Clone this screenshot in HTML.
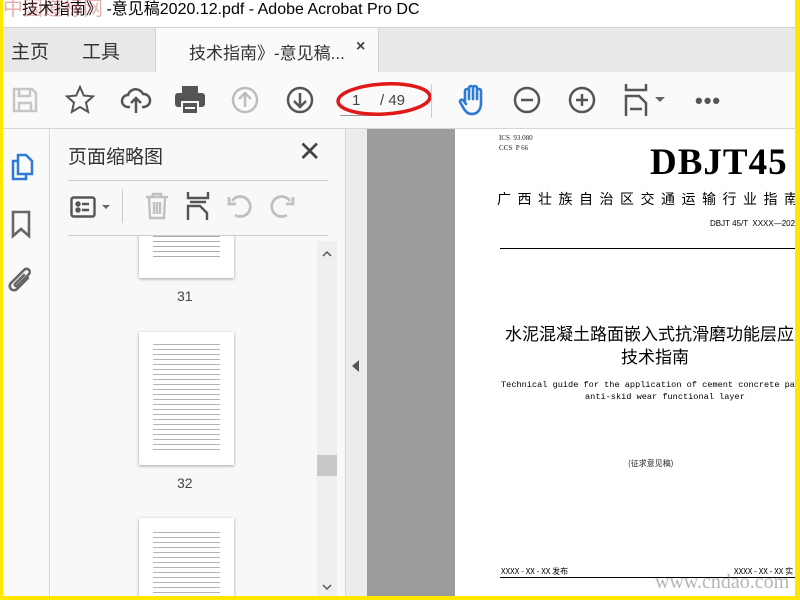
<!DOCTYPE html>
<html><head><meta charset="utf-8"><style>
*{margin:0;padding:0;box-sizing:border-box}
html,body{width:800px;height:600px;overflow:hidden}
body{background:#ffe800;font-family:"Liberation Sans","Noto Sans CJK SC",sans-serif;position:relative}
.a{position:absolute}
.lines{background:repeating-linear-gradient(to bottom,#777 0 1.2px,transparent 1.2px 5px)}
svg{position:absolute;overflow:visible}
</style></head><body>
<div class="a" style="left:3px;top:0;width:792px;height:596px;background:#fff"></div>
<div class="a" style="left:22px;top:0;font-size:16px;color:#000;line-height:20px;white-space:nowrap">技术指南》 -意见稿2020.12.pdf - Adobe Acrobat Pro DC</div>
<div class="a" style="left:3px;top:-3px;font-size:20px;color:rgba(200,80,80,.45);line-height:24px">中国道标网</div>
<!-- tab bar -->
<div class="a" style="left:3px;top:27px;width:792px;height:45px;background:#e8e8e8;border-top:1px solid #d0d0d0"></div>
<div class="a" style="left:11px;top:37px;font-size:19px;color:#333">主页</div>
<div class="a" style="left:82px;top:37px;font-size:19px;color:#333">工具</div>
<div class="a" style="left:155px;top:28px;width:224px;height:44px;background:#fafafa;border-left:1px solid #d0d0d0;border-right:1px solid #d0d0d0"></div>
<div class="a" style="left:189px;top:39px;font-size:17px;color:#333">技术指南》-意见稿...</div>
<div class="a" style="left:356px;top:38px;font-size:16px;color:#444;font-weight:bold">×</div>
<!-- toolbar -->
<div class="a" style="left:3px;top:72px;width:792px;height:57px;background:#fafafa;border-bottom:1px solid #d6d6d6"></div>
<svg style="left:12px;top:87px" width="26" height="26" viewBox="0 0 26 26" fill="none" stroke="#c6c6c6" stroke-width="2.5"><path d="M2 2h18l4 4v18H2z"/><path d="M7 2v7h11V2M7 24v-8h12v8"/></svg>
<svg style="left:65px;top:85px" width="30" height="30" viewBox="0 0 30 30" fill="none" stroke="#555" stroke-width="2"><path d="M15 2l3.8 8.6 9.2.8-7 6.2 2.1 9.2L15 22l-8.1 4.8L9 17.6 2 11.4l9.2-.8z"/></svg>
<svg style="left:121px;top:86px" width="30" height="28" viewBox="0 0 30 28" fill="none" stroke="#555" stroke-width="2.5"><path d="M9 21H7a6 6 0 0 1 0-12 8 8 0 0 1 15-1 6 6 0 0 1 1 13h-2"/><path d="M15 27V12M10 17l5-5 5 5"/></svg>
<svg style="left:175px;top:86px" width="30" height="28" viewBox="0 0 30 28"><rect x="7" y="0" width="16" height="7" fill="#555"/><rect x="0" y="7" width="30" height="14" rx="3" fill="#555"/><rect x="7" y="16" width="16" height="12" fill="#555" stroke="#fafafa" stroke-width="2"/><rect x="10" y="21" width="10" height="2" fill="#fafafa"/></svg>
<svg style="left:231px;top:86px" width="28" height="28" viewBox="0 0 28 28" fill="none" stroke="#bdbdbd" stroke-width="2.5"><circle cx="14" cy="14" r="12"/><path d="M14 21V8M8 13l6-6 6 6"/></svg>
<svg style="left:286px;top:86px" width="28" height="28" viewBox="0 0 28 28" fill="none" stroke="#555" stroke-width="2.5"><circle cx="14" cy="14" r="12"/><path d="M14 7v13M8 15l6 6 6-6"/></svg>
<div class="a" style="left:340px;top:115px;width:36px;height:1px;background:#999"></div>
<div class="a" style="left:352px;top:92px;font-size:15px;color:#444">1</div>
<div class="a" style="left:380px;top:92px;font-size:15px;color:#444">/ 49</div>
<svg style="left:335px;top:80px" width="98" height="38" viewBox="0 0 98 38"><ellipse cx="49" cy="19" rx="46" ry="15" fill="none" stroke="#e01818" stroke-width="3.5" transform="rotate(-3 49 19)"/></svg>
<div class="a" style="left:431px;top:84px;width:1px;height:34px;background:#ccc"></div>
<svg style="left:458px;top:84px" width="30" height="32" viewBox="0 0 30 32" fill="none" stroke="#2d7ad6" stroke-width="2.6" stroke-linecap="round" stroke-linejoin="round"><path d="M7 17V7a2 2 0 0 1 4 0v8M11 15V4a2 2 0 0 1 4 0v11M15 14V4a2 2 0 0 1 4 0v11M19 14V7a2 2 0 0 1 4 0v12c0 7-4 11-9 11-4 0-6-2-8-5l-4-7a2 2 0 0 1 3-2l3 4"/></svg>
<svg style="left:513px;top:86px" width="28" height="28" viewBox="0 0 28 28" fill="none" stroke="#555" stroke-width="2.5"><circle cx="14" cy="14" r="12"/><path d="M8 14h12"/></svg>
<svg style="left:568px;top:86px" width="28" height="28" viewBox="0 0 28 28" fill="none" stroke="#555" stroke-width="2.5"><circle cx="14" cy="14" r="12"/><path d="M8 14h12M14 8v12"/></svg>
<svg style="left:624px;top:84px" width="24" height="32" viewBox="0 0 24 32" fill="none" stroke="#555" stroke-width="2.5"><path d="M2 0v6h20V0M2 32V12h13l7 7v13M6 25h12"/></svg>
<div class="a" style="left:655px;top:97px;border-left:5px solid transparent;border-right:5px solid transparent;border-top:5px solid #666"></div>
<div class="a" style="left:695px;top:88px;font-size:22px;color:#555;letter-spacing:1px;font-weight:bold">•••</div>
<!-- left rail -->
<div class="a" style="left:3px;top:129px;width:47px;height:467px;background:#fafafa;border-right:1px solid #d6d6d6"></div>
<svg style="left:10px;top:152px" width="24" height="30" viewBox="0 0 24 30" fill="none" stroke="#2d7ad6" stroke-width="2.5"><path d="M8 3h8l6 6v13H8z"/><path d="M8 9H3v18h13v-5"/></svg>
<svg style="left:11px;top:210px" width="20" height="28" viewBox="0 0 20 28" fill="none" stroke="#666" stroke-width="2.6"><path d="M2 2h16v24l-8-7-8 7z"/></svg>
<svg style="left:8px;top:267px" width="26" height="28" viewBox="0 0 26 28" fill="none" stroke="#666" stroke-width="2.6" stroke-linecap="round"><path d="M20 11L9 22a4 4 0 0 1-6-6L16 3a3 3 0 0 1 5 4L9 19a1.5 1.5 0 0 1-2-2l9-9"/></svg>
<!-- panel -->
<div class="a" style="left:51px;top:129px;width:294px;height:467px;background:#f8f8f8"></div>
<div class="a" style="left:68px;top:142px;font-size:19px;color:#333">页面缩略图</div>
<div class="a" style="left:298px;top:137px;font-size:28px;color:#444;line-height:30px">✕</div>
<div class="a" style="left:68px;top:180px;width:260px;height:1px;background:#ccc"></div>
<svg style="left:70px;top:196px" width="26" height="22" viewBox="0 0 26 22" fill="none" stroke="#555" stroke-width="2.4"><rect x="1.5" y="1.5" width="23" height="19" rx="2"/><circle cx="8" cy="8" r="1.5" fill="#555"/><circle cx="8" cy="14" r="1.5" fill="#555"/><path d="M12 8h7M12 14h7"/></svg>
<div class="a" style="left:102px;top:205px;border-left:4px solid transparent;border-right:4px solid transparent;border-top:4px solid #666"></div>
<div class="a" style="left:122px;top:189px;width:1px;height:34px;background:#ccc"></div>
<svg style="left:144px;top:192px" width="26" height="28" viewBox="0 0 26 28" fill="none" stroke="#c0c0c0" stroke-width="2.4"><path d="M2 5h22M9 5V2h8v3M5 5l1 21h14l1-21M10 10v12M13 10v12M16 10v12"/></svg>
<svg style="left:186px;top:192px" width="24" height="28" viewBox="0 0 24 28" fill="none" stroke="#555" stroke-width="2.4"><path d="M2 0v6h20V0M4 10h16M2 28V14h12l7 7v7"/></svg>
<svg style="left:227px;top:193px" width="26" height="26" viewBox="0 0 26 26" fill="none" stroke="#c0c0c0" stroke-width="2.8"><path d="M8 22A10 10 0 1 0 5 8"/><path d="M2 4v7h7"/></svg>
<svg style="left:269px;top:193px" width="26" height="26" viewBox="0 0 26 26" fill="none" stroke="#c0c0c0" stroke-width="2.8"><path d="M18 22A10 10 0 1 1 21 8"/><path d="M24 4v7h-7"/></svg>
<div class="a" style="left:68px;top:235px;width:260px;height:1px;background:#ccc"></div>
<!-- thumbnails -->
<div class="a" style="left:68px;top:236px;width:249px;height:360px;overflow:hidden">
 <div class="a" style="left:71px;top:-10px;width:95px;height:52px;background:#fff;box-shadow:0 1px 3px rgba(0,0,0,.35)"><div class="a lines" style="left:14px;top:10px;width:67px;height:24px;opacity:.6"></div></div>
 <div class="a" style="left:109px;top:52px;font-size:14px;color:#444">31</div>
 <div class="a" style="left:71px;top:96px;width:95px;height:133px;background:#fff;box-shadow:0 1px 3px rgba(0,0,0,.35)"><div class="a lines" style="left:14px;top:12px;width:67px;height:106px;opacity:.55"></div></div>
 <div class="a" style="left:109px;top:239px;font-size:14px;color:#444">32</div>
 <div class="a" style="left:71px;top:282px;width:95px;height:120px;background:#fff;box-shadow:0 1px 3px rgba(0,0,0,.35)"><div class="a lines" style="left:14px;top:14px;width:67px;height:100px;opacity:.55"></div></div>
</div>
<div class="a" style="left:317px;top:241px;width:20px;height:355px;background:#efefef;overflow:hidden">
 <div class="a" style="left:0;top:214px;width:20px;height:21px;background:#c8c8c8"></div>
 <svg style="left:5px;top:10px" width="10" height="6" viewBox="0 0 10 6" fill="none" stroke="#555" stroke-width="1.5"><path d="M1 5l4-4 4 4"/></svg>
 <svg style="left:5px;top:343px" width="10" height="6" viewBox="0 0 10 6" fill="none" stroke="#555" stroke-width="1.5"><path d="M1 1l4 4 4-4"/></svg>
</div>
<!-- divider -->
<div class="a" style="left:345px;top:129px;width:22px;height:467px;background:#ececec;border-left:1px solid #d6d6d6"></div>
<div class="a" style="left:352px;top:360px;border-top:6px solid transparent;border-bottom:6px solid transparent;border-right:7px solid #555"></div>
<!-- doc area -->
<div class="a" style="left:367px;top:129px;width:88px;height:467px;background:#9c9c9c"></div>
<div class="a" style="left:455px;top:129px;width:340px;height:467px;background:#fff;overflow:hidden;font-family:'Liberation Serif','Noto Serif CJK SC',serif">
 <div class="a" style="left:44px;top:5px;font-size:7px;color:#222">ICS &nbsp;93.080</div>
 <div class="a" style="left:44px;top:15px;font-size:7px;color:#222">CCS &nbsp;P 66</div>
 <div class="a" style="left:195px;top:12px;font-size:37px;font-weight:bold;color:#000;letter-spacing:1px;white-space:nowrap;line-height:44px">DBJT45</div>
 <div class="a" style="left:42px;top:60px;font-size:14px;color:#000;letter-spacing:6.5px;white-space:nowrap;font-family:'Noto Sans CJK SC',sans-serif">广西壮族自治区交通运输行业指南</div>
 <div class="a" style="left:255px;top:90px;font-size:8px;color:#000;white-space:nowrap;font-family:'Liberation Sans',sans-serif">DBJT 45/T &nbsp;XXXX—2020</div>
 <div class="a" style="left:45px;top:119px;width:300px;height:1px;background:#000"></div>
 <div class="a" style="left:50px;top:191px;font-size:17px;color:#000;white-space:nowrap;font-family:'Noto Sans CJK SC',sans-serif">水泥混凝土路面嵌入式抗滑磨功能层应用</div>
 <div class="a" style="left:166px;top:214px;font-size:17px;color:#000;font-family:'Noto Sans CJK SC',sans-serif">技术指南</div>
 <div class="a" style="left:46px;top:251px;font-size:8.6px;color:#000;white-space:nowrap;font-family:'Liberation Mono',monospace">Technical guide for the application of cement concrete pavement embedc</div>
 <div class="a" style="left:130px;top:263px;font-size:8.6px;color:#000;white-space:nowrap;font-family:'Liberation Mono',monospace">anti-skid wear functional layer</div>
 <div class="a" style="left:173px;top:329px;font-size:8px;color:#222;font-family:'Noto Sans CJK SC',sans-serif">(征求意见稿)</div>
 <div class="a" style="left:46px;top:437px;font-size:8px;color:#000;white-space:nowrap;font-family:'Noto Sans CJK SC',sans-serif">XXXX - XX - XX 发布</div>
 <div class="a" style="left:279px;top:437px;font-size:8px;color:#000;white-space:nowrap;font-family:'Noto Sans CJK SC',sans-serif">XXXX - XX - XX 实</div>
 <div class="a" style="left:45px;top:448px;width:300px;height:1px;background:#000"></div>
 <div class="a" style="left:200px;top:441px;font-size:20px;color:rgba(120,120,120,.55);white-space:nowrap;line-height:24px">www.cndao.com</div>
</div>
</body></html>
